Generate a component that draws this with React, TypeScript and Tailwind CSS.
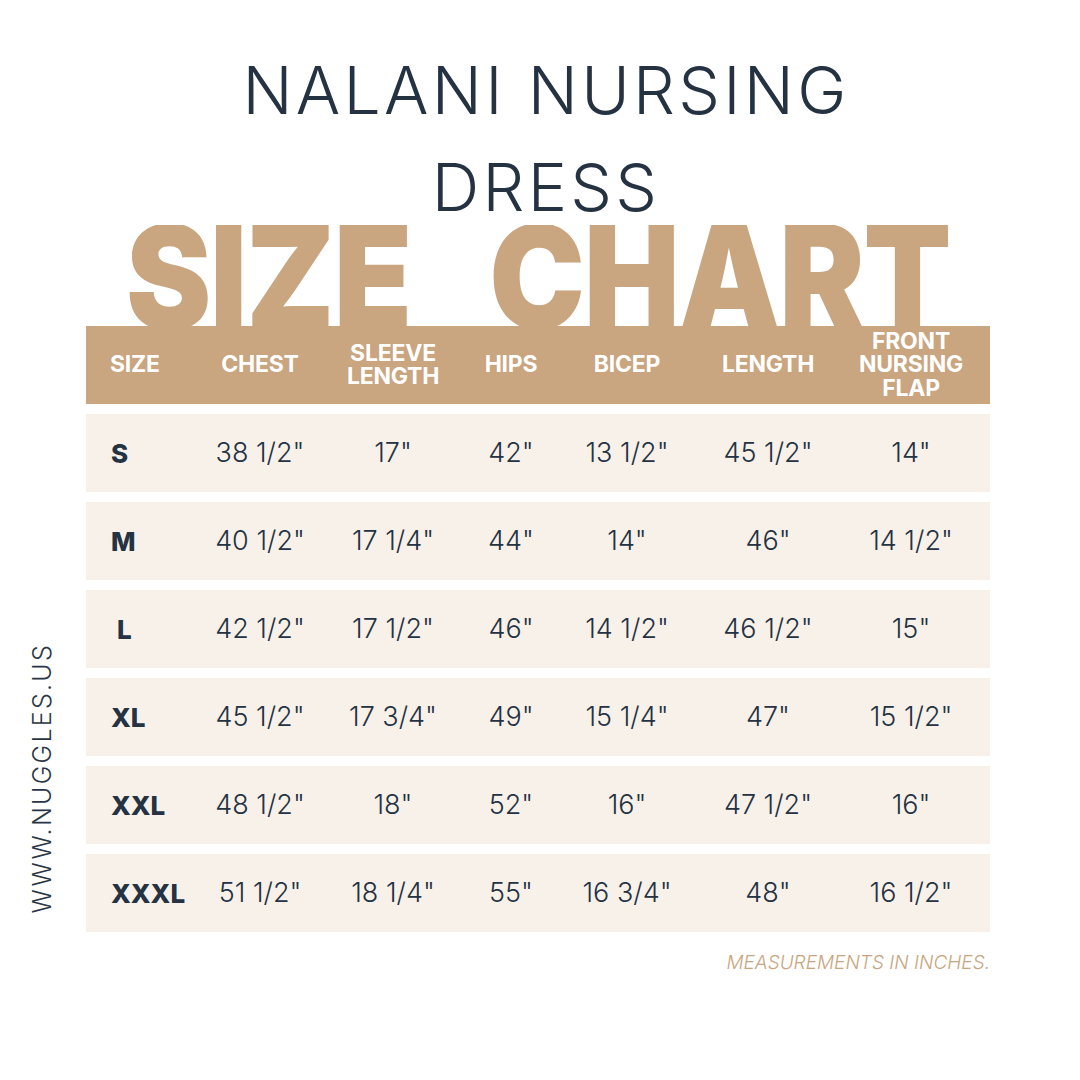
const rows = [
  ["S", `38 1/2"`, `17"`, `42"`, `13 1/2"`, `45 1/2"`, `14"`],
  ["M", `40 1/2"`, `17 1/4"`, `44"`, `14"`, `46"`, `14 1/2"`],
  ["L", `42 1/2"`, `17 1/2"`, `46"`, `14 1/2"`, `46 1/2"`, `15"`],
  ["XL", `45 1/2"`, `17 3/4"`, `49"`, `15 1/4"`, `47"`, `15 1/2"`],
  ["XXL", `48 1/2"`, `18"`, `52"`, `16"`, `47 1/2"`, `16"`],
  ["XXXL", `51 1/2"`, `18 1/4"`, `55"`, `16 3/4"`, `48"`, `16 1/2"`],
];

const headers = [["CHEST"], ["SLEEVE", "LENGTH"], ["HIPS"], ["BICEP"], ["LENGTH"], ["FRONT", "NURSING", "FLAP"]];

const grid = "grid grid-cols-[120px_108px_158px_78px_154px_128px_158px] items-center h-[78px]";

export default function App() {
  return (
    <div className="w-[1080px] h-[1080px] bg-white text-[#243242] font-['Inter',sans-serif] overflow-hidden">
      <div className="pt-[42px] pl-[12px] text-center text-[66px] leading-[97px] font-light tracking-[0.05em]">
        <div>NALANI NURSING</div>
        <div>DRESS</div>
      </div>

      <div className="-mt-[11px] h-[101px] overflow-hidden flex justify-center">
        <div className="-mt-[20px] -ml-[4px] scale-x-[0.89] text-[144px] leading-[144px] font-black text-[#c9a580] tracking-[-0.01em] whitespace-nowrap">
          <span>SIZE</span>
          <span className="ml-[88px]">CHART</span>
        </div>
      </div>

      <div className="flex">
        <div className="w-[86px] flex justify-center items-end pb-[64px]">
          <span className="[writing-mode:vertical-rl] rotate-180 text-[25px] font-light tracking-[0.09em] text-[#2a3645]">
            WWW.NUGGLES.US
          </span>
        </div>

        <div className="w-[904px] flex flex-col gap-[10px]">
          <div className={`${grid} bg-[#c9a580] text-white font-bold text-[23px] leading-[23.5px] tracking-[-0.01em]`}>
            <div className="pl-[24px]">SIZE</div>
            {headers.map((h, i) => (
              <div key={i} className="text-center">
                {h.map((line) => (
                  <div key={line}>{line}</div>
                ))}
              </div>
            ))}
          </div>

          {rows.map((r) => (
            <div key={r[0]} className={`${grid} bg-[#f8f1ea]`}>
              <div className={`text-[26px] font-extrabold ${r[0] === "L" ? "pl-[31px]" : "pl-[25px]"}`}>{r[0]}</div>
              {r.slice(1).map((v, i) => (
                <div key={i} className="text-center text-[27px] font-light">
                  {v}
                </div>
              ))}
            </div>
          ))}

          <div className="mt-[7px] text-right text-[19px] italic font-light text-[#c9a580]">
            MEASUREMENTS IN INCHES.
          </div>
        </div>
      </div>
    </div>
  );
}
